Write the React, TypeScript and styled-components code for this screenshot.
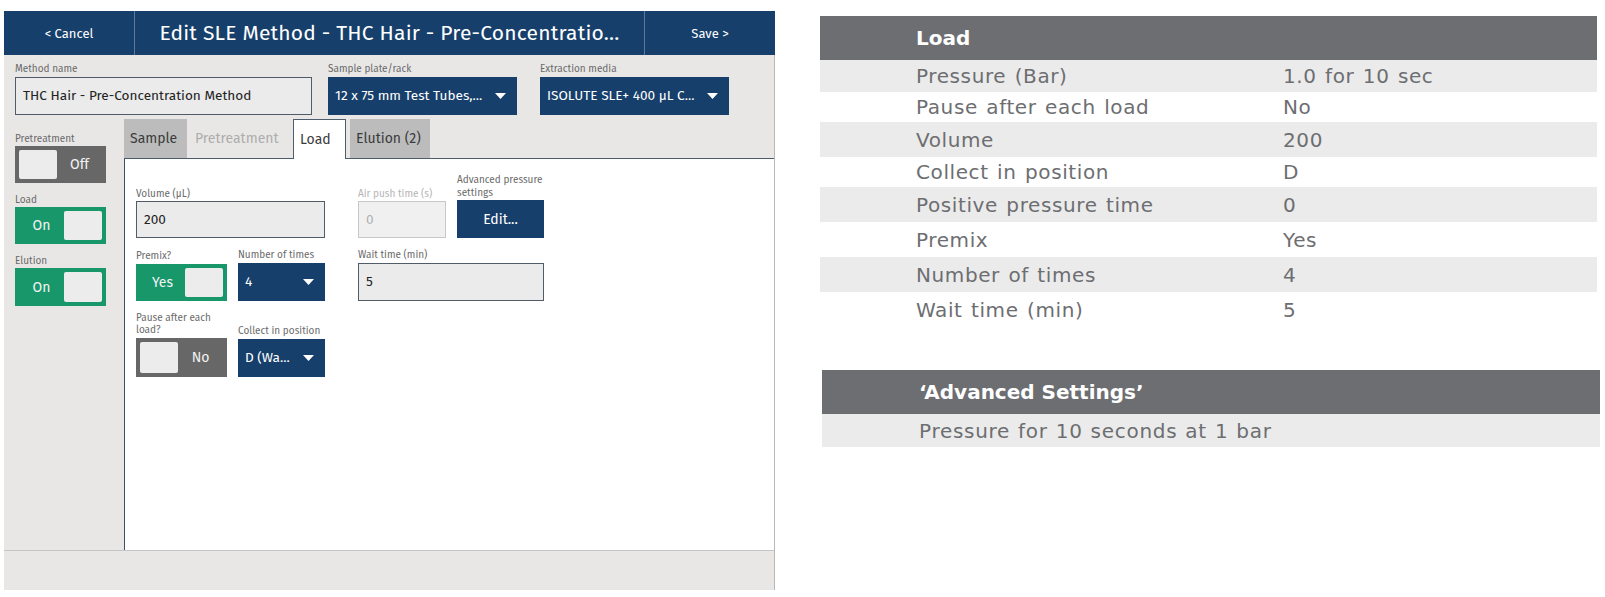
import styled, { createGlobalStyle } from 'styled-components'

const navy = '#173f6b'
const green = '#17976a'
const slate = '#666766'
const panelGrey = '#e8e7e6'

const GlobalStyle = createGlobalStyle`
  body {
    margin: 0;
    background: #fff;
  }
  * { box-sizing: border-box; }
`

interface Row {
  label: string
  value: string
  h: number
}

const loadRows: Row[] = [
  { label: 'Pressure (Bar)', value: '1.0 for 10 sec', h: 32 },
  { label: 'Pause after each load', value: 'No', h: 30 },
  { label: 'Volume', value: '200', h: 35 },
  { label: 'Collect in position', value: 'D', h: 30 },
  { label: 'Positive pressure time', value: '0', h: 35 },
  { label: 'Premix', value: 'Yes', h: 35 },
  { label: 'Number of times', value: '4', h: 35 },
  { label: 'Wait time (min)', value: '5', h: 35 },
]

const Caret = () => (
  <svg width="11" height="6" viewBox="0 0 11 6">
    <path d="M0 0 H11 L5.5 6 Z" fill="#fff" />
  </svg>
)

const Toggle = ({ on, text, h = 37 }: { on: boolean; text: string; h?: number }) => (
  <ToggleBox $on={on} $h={h}>
    {on ? (
      <>
        <ToggleText>{text}</ToggleText>
        <Knob />
      </>
    ) : (
      <>
        <Knob />
        <ToggleText>{text}</ToggleText>
      </>
    )}
  </ToggleBox>
)

const Dropdown = ({ text, w }: { text: string; w: number }) => (
  <Select $w={w}>
    <span>{text}</span>
    <Caret />
  </Select>
)

const App = () => {
  return (
    <Page>
      <GlobalStyle />
      <Screen>
        <TopBar>
          <BarButton>&lt; Cancel</BarButton>
          <Title>Edit SLE Method - THC Hair - Pre-Concentratio...</Title>
          <BarButton>Save &gt;</BarButton>
        </TopBar>
        <Body>
          <MethodRow>
            <Field $w={297}>
              <Label>Method name</Label>
              <TextInput>THC Hair - Pre-Concentration Method</TextInput>
            </Field>
            <Field $w={189} $ml={16}>
              <Label>Sample plate/rack</Label>
              <Dropdown text="12 x 75 mm Test Tubes,..." w={189} />
            </Field>
            <Field $w={189} $ml={23}>
              <Label>Extraction media</Label>
              <Dropdown text="ISOLUTE SLE+ 400 µL C..." w={189} />
            </Field>
          </MethodRow>
          <Main>
            <Sidebar>
              <SideLabel>Pretreatment</SideLabel>
              <Toggle on={false} text="Off" />
              <SideLabel>Load</SideLabel>
              <Toggle on text="On" />
              <SideLabel>Elution</SideLabel>
              <Toggle on text="On" h={38} />
            </Sidebar>
            <Panel>
              <Tabs>
                <Tab $kind="grey">Sample</Tab>
                <Tab $kind="disabled">Pretreatment</Tab>
                <Tab $kind="active">Load</Tab>
                <Tab $kind="grey">Elution (2)</Tab>
              </Tabs>
              <TabContent>
                <Cell $span={2}>
                  <Label>Volume (µL)</Label>
                  <TextInput $w={189} $h={37}>200</TextInput>
                </Cell>
                <Cell>
                  <Label $muted>Air push time (s)</Label>
                  <TextInput $w={88} $h={37} $disabled>0</TextInput>
                </Cell>
                <Cell>
                  <Label>Advanced pressure settings</Label>
                  <EditButton>Edit...</EditButton>
                </Cell>

                <Cell>
                  <Label>Premix?</Label>
                  <Toggle on text="Yes" />
                </Cell>
                <Cell>
                  <Label>Number of times</Label>
                  <Dropdown text="4" w={87} />
                </Cell>
                <Cell $span={2}>
                  <Label>Wait time (min)</Label>
                  <TextInput $w={186} $h={38}>5</TextInput>
                </Cell>

                <Cell>
                  <Label>Pause after each load?</Label>
                  <Toggle on={false} text="No" h={39} />
                </Cell>
                <Cell>
                  <Label>Collect in position</Label>
                  <Dropdown text="D (Wa..." w={87} />
                </Cell>
              </TabContent>
            </Panel>
          </Main>
          <Footer />
        </Body>
      </Screen>

      <Tables>
        <Table $w={777}>
          <TableHead>Load</TableHead>
          {loadRows.map((row, index) => (
            <TableRow key={row.label} $h={row.h} $shaded={index % 2 === 0}>
              <span>{row.label}</span>
              <span>{row.value}</span>
            </TableRow>
          ))}
        </Table>
        <Table $w={778} $ml={2}>
          <TableHead $pl={97} $size={20}>‘Advanced Settings’</TableHead>
          <NoteRow>Pressure for 10 seconds at 1 bar</NoteRow>
        </Table>
      </Tables>
    </Page>
  )
}

const Page = styled.div`
  display: flex;
  align-items: flex-start;
  width: 1605px;
  height: 597px;
  overflow: hidden;
  font-family: 'Fira Sans', 'Noto Sans', sans-serif;
`

const Screen = styled.div`
  display: flex;
  flex-direction: column;
  width: 771px;
  margin: 11px 0 0 4px;
`

const TopBar = styled.div`
  display: flex;
  height: 44px;
  background: ${navy};
  color: #fff;
`

const BarButton = styled.div`
  display: flex;
  align-items: center;
  justify-content: center;
  width: 131px;
  font-size: 13px;
  &:first-child { border-right: 1px solid #5d7898; }
  &:last-child { border-left: 1px solid #5d7898; }
`

const Title = styled.div`
  flex: 1;
  display: flex;
  align-items: center;
  justify-content: center;
  font-size: 21px;
  letter-spacing: 0.2px;
`

const Body = styled.div`
  display: flex;
  flex-direction: column;
  background: ${panelGrey};
  border-right: 1px solid #b8b8b8;
`

const MethodRow = styled.div`
  display: flex;
  height: 65px;
  padding: 8px 0 0 11px;
`

const Field = styled.div<{ $w: number; $ml?: number }>`
  display: flex;
  flex-direction: column;
  width: ${p => p.$w}px;
  margin-left: ${p => p.$ml ?? 0}px;
`

const Label = styled.div<{ $muted?: boolean }>`
  font-size: 10px;
  line-height: 12.5px;
  color: ${p => (p.$muted ? '#b4b4b4' : '#6a6a6a')};
  margin-bottom: 1px;
`

const TextInput = styled.div<{ $w?: number; $h?: number; $disabled?: boolean }>`
  display: flex;
  align-items: center;
  width: ${p => (p.$w ? `${p.$w}px` : '100%')};
  height: ${p => p.$h ?? 38}px;
  padding-left: 7px;
  background: ${p => (p.$disabled ? '#f0f0f0' : '#ebebeb')};
  border: 1.5px solid ${p => (p.$disabled ? '#c8c8c8' : '#505c68')};
  color: ${p => (p.$disabled ? '#b0b0b0' : '#222')};
  font-size: 13.6px;
`

const Select = styled.div<{ $w: number }>`
  display: flex;
  align-items: center;
  justify-content: space-between;
  width: ${p => p.$w}px;
  height: 38px;
  padding: 0 11px 0 7px;
  background: ${navy};
  color: #fff;
  font-size: 13.6px;
  white-space: nowrap;
`

const Main = styled.div`
  display: flex;
  height: 430px;
`

const Sidebar = styled.div`
  display: flex;
  flex-direction: column;
  width: 120px;
  padding: 14px 0 0 11px;
`

const SideLabel = styled.div`
  font-size: 10px;
  line-height: 11px;
  color: #6a6a6a;
  margin: 12px 0 1px;
  &:first-child { margin-top: 0; }
`

const ToggleBox = styled.div<{ $on: boolean; $h: number }>`
  display: flex;
  align-items: center;
  justify-content: space-between;
  width: 91px;
  height: ${p => p.$h}px;
  padding: 4px;
  background: ${p => (p.$on ? green : slate)};
`

const Knob = styled.div`
  width: 38px;
  height: 100%;
  background: #ececec;
  border-radius: 2px;
`

const ToggleText = styled.div`
  flex: 1;
  text-align: center;
  color: #f2f2f2;
  font-size: 14px;
`

const Panel = styled.div`
  flex: 1;
  display: flex;
  flex-direction: column;
  background: #fff;
  border-left: 1px solid #3e5064;
`

const Tabs = styled.div`
  display: flex;
  align-items: flex-end;
  height: 39px;
  background: ${panelGrey};
  border-bottom: 1px solid #4d5d6e;
  margin-left: -1px;
`

const Tab = styled.div<{ $kind: 'grey' | 'disabled' | 'active' }>`
  display: flex;
  align-items: center;
  height: ${p => (p.$kind === 'active' ? '40px' : '39px')};
  padding: 0 7px 0 6px;
  margin-right: ${p => (p.$kind === 'active' ? '4px' : '0')};
  margin-bottom: ${p => (p.$kind === 'active' ? '-1px' : '0')};
  font-size: 14px;
  background: ${p => (p.$kind === 'grey' ? '#bcbcbc' : p.$kind === 'active' ? '#fff' : 'transparent')};
  color: ${p => (p.$kind === 'disabled' ? '#adadad' : '#3b3b3b')};
  border: ${p => (p.$kind === 'active' ? '1px solid #4d5d6e' : 'none')};
  border-bottom: none;
  &:first-child { width: 63px; }
  &:nth-child(2) { width: 106px; padding-left: 8px; }
  &:nth-child(3) { width: 53px; }
  &:nth-child(4) { width: 80px; }
`

const TabContent = styled.div`
  display: grid;
  grid-template-columns: 102px 120px 99px 87px;
  row-gap: 11px;
  align-items: end;
  padding: 15px 0 0 11px;
`

const Cell = styled.div<{ $span?: number }>`
  display: flex;
  flex-direction: column;
  grid-column: span ${p => p.$span ?? 1};
  & > ${Label} { width: 92px; }
`

const EditButton = styled.div`
  display: flex;
  align-items: center;
  justify-content: center;
  width: 87px;
  height: 38px;
  background: ${navy};
  color: #fff;
  font-size: 14px;
`

const Footer = styled.div`
  height: 40px;
  border-top: 1px solid #c6c6c6;
`

const Tables = styled.div`
  display: flex;
  flex-direction: column;
  gap: 43px;
  margin: 16px 0 0 45px;
  font-family: 'DejaVu Sans', Verdana, sans-serif;
`

const Table = styled.div<{ $w: number; $ml?: number }>`
  display: flex;
  flex-direction: column;
  width: ${p => p.$w}px;
  margin-left: ${p => p.$ml ?? 0}px;
`

const TableHead = styled.div<{ $pl?: number; $size?: number }>`
  display: flex;
  align-items: center;
  height: 44px;
  padding-left: ${p => p.$pl ?? 96}px;
  background: #6d6e71;
  color: #fff;
  font-weight: bold;
  font-size: ${p => p.$size ?? 20}px;
`

const TableRow = styled.div<{ $h: number; $shaded: boolean }>`
  display: grid;
  grid-template-columns: 367px 1fr;
  align-items: center;
  height: ${p => p.$h}px;
  padding-left: 96px;
  background: ${p => (p.$shaded ? '#ebebeb' : '#fff')};
  color: #6d6e71;
  font-size: 20px;
  letter-spacing: 0.6px;
  word-spacing: 1.5px;
`

const NoteRow = styled.div`
  display: flex;
  align-items: center;
  height: 33px;
  padding-left: 97px;
  background: #ebebeb;
  color: #6d6e71;
  font-size: 20px;
  letter-spacing: 0.7px;
  word-spacing: 1px;
`

export default App
